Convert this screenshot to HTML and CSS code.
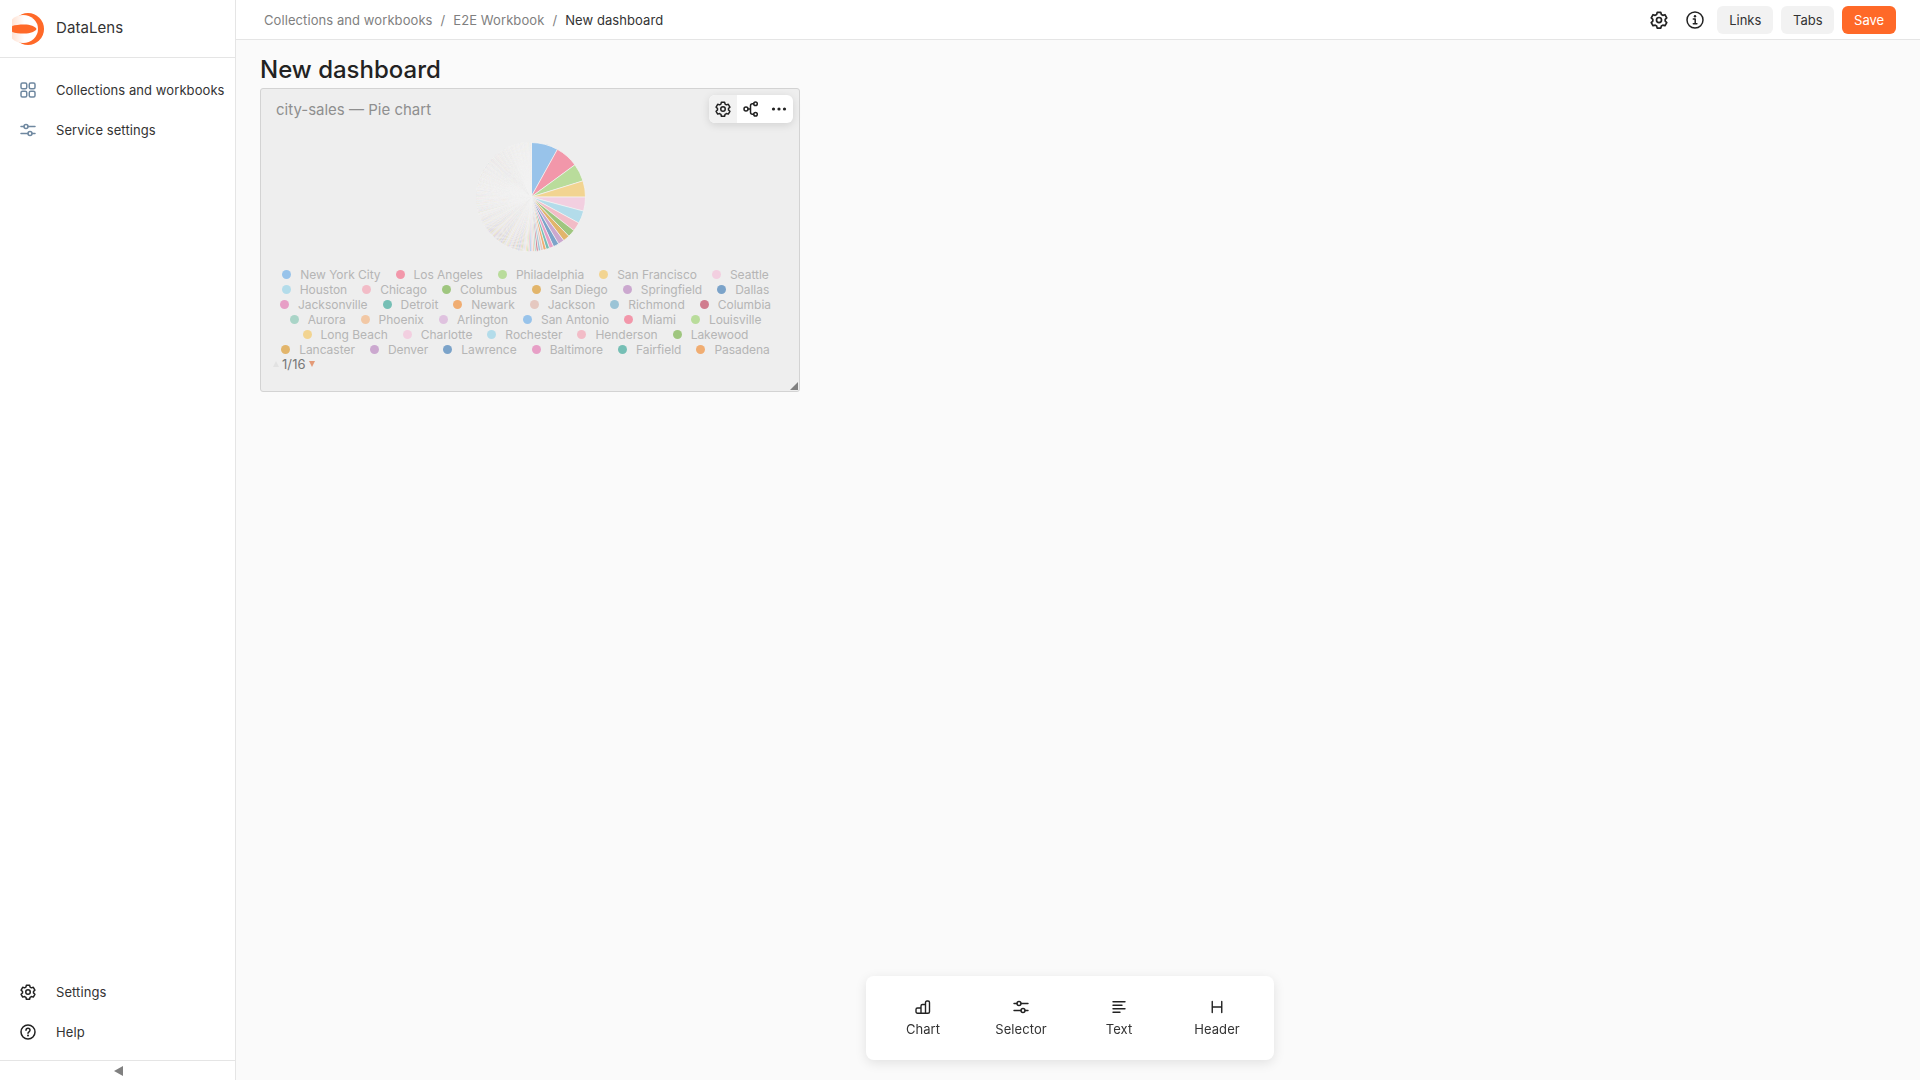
FILE: index.html
```html
<!DOCTYPE html>
<html lang="en">
<head>
  <meta charset="UTF-8">
  <title>New dashboard</title>
  <link rel="stylesheet" href="styles.css">
</head>
<body>
  <aside class="sidebar">
    <div class="logo-row">
      <svg class="logo" width="32" height="32" viewBox="0 0 32 32">
        <defs>
          <linearGradient id="logo-fade" x1="0" y1="0" x2="1" y2="0">
            <stop offset="0" stop-color="#ffd9c6"/>
            <stop offset="0.55" stop-color="#ffffff"/>
          </linearGradient>
        </defs>
        <circle cx="16" cy="16" r="16" fill="#ff6928"/>
        <ellipse cx="11" cy="16" rx="15" ry="14" fill="url(#logo-fade)"/>
        <path d="M.2 13c3-1 7-1.500 12-1.500 6 0 11.300 1.800 12.300 4.500-1 2.700-6.300 4.500-12.300 4.500-5 0-9-.5-12-1.500C-.1 17-.1 15 .2 13z" fill="#ff6928"/>
      </svg>
      <span class="logo-text">DataLens</span>
    </div>
    <nav class="nav">
      <a class="nav-item">
        <svg class="nav-icon slate" viewBox="0 0 16 16"><rect x="1" y="1" width="5.750" height="5.750" rx="1.500"/><rect x="9.250" y="1" width="5.750" height="5.750" rx="1.500"/><rect x="1" y="9.250" width="5.750" height="5.750" rx="1.500"/><rect x="9.250" y="9.250" width="5.750" height="5.750" rx="1.500"/></svg>
        <span>Collections and workbooks</span>
      </a>
      <a class="nav-item">
        <svg class="nav-icon slate" viewBox="0 0 16 16"><path d="M1 4.500h3M8 4.500h7M1 11.500h7M12 11.500h3"/><circle cx="6" cy="4.500" r="2"/><circle cx="10" cy="11.500" r="2"/></svg>
        <span>Service settings</span>
      </a>
    </nav>
    <div class="sidebar-spacer"></div>
    <nav class="nav nav-bottom">
      <a class="nav-item">
        <svg class="nav-icon" viewBox="0 0 16 16"><path d="M6.400 1.200h3.200l.5 1.900 1.300.75 1.900-.55 1.600 2.800-1.400 1.350v1.500l1.400 1.350-1.600 2.800-1.900-.55-1.300.75-.5 1.900H6.400l-.5-1.900-1.300-.75-1.900.55-1.600-2.800 1.400-1.350v-1.500L1.100 6.100l1.600-2.800 1.900.55 1.300-.75z"/><circle cx="8" cy="8" r="2.250"/></svg>
        <span>Settings</span>
      </a>
      <a class="nav-item">
        <svg class="nav-icon" viewBox="0 0 16 16"><circle cx="8" cy="8" r="7"/><path d="M6 6.300c0-2.600 4-2.600 4 0 0 1.500-2 1.500-2 3"/><circle class="dot" cx="8" cy="11.500" r="1"/></svg>
        <span>Help</span>
      </a>
    </nav>
    <div class="collapse-row"><span class="collapse-arrow"></span></div>
  </aside>

  <div class="page">
    <header class="topbar">
      <div class="breadcrumbs">
        <span>Collections and workbooks</span>
        <span class="sep">/</span>
        <span>E2E Workbook</span>
        <span class="sep">/</span>
        <span class="current">New dashboard</span>
      </div>
      <div class="actions">
        <svg class="top-icon" viewBox="0 0 16 16"><path d="M6.400 1.200h3.200l.5 1.900 1.300.75 1.900-.55 1.600 2.800-1.400 1.350v1.500l1.400 1.350-1.600 2.800-1.900-.55-1.300.75-.5 1.900H6.400l-.5-1.900-1.300-.75-1.900.55-1.600-2.800 1.400-1.350v-1.500L1.100 6.100l1.600-2.800 1.900.55 1.300-.75z"/><circle cx="8" cy="8" r="2.250"/></svg>
        <svg class="top-icon info" viewBox="0 0 18 18"><circle cx="9" cy="9" r="8"/><path d="M7.300 8h1.900v4.500M7.300 12.750h3.600"/><circle class="dot" cx="9" cy="5.250" r="1.200"/></svg>
        <button class="btn">Links</button>
        <button class="btn btn-tabs">Tabs</button>
        <button class="btn btn-save">Save</button>
      </div>
    </header>

    <main class="content">
      <h1>New dashboard</h1>
      <section class="widget">
        <div class="widget-title">city-sales — Pie chart</div>
        <div class="widget-controls">
          <span class="control control-active">
            <svg class="ctl-icon" viewBox="0 0 16 16"><path d="M6.400 1.200h3.200l.5 1.900 1.300.75 1.900-.55 1.600 2.800-1.400 1.350v1.500l1.400 1.350-1.600 2.800-1.900-.55-1.300.75-.5 1.900H6.400l-.5-1.900-1.300-.75-1.900.55-1.600-2.800 1.400-1.350v-1.500L1.100 6.100l1.600-2.800 1.900.55 1.300-.75z"/><circle cx="8" cy="8" r="2.250"/></svg>
          </span>
          <span class="control">
            <svg class="ctl-icon" viewBox="0 0 16 16"><circle cx="3" cy="8" r="2"/><circle cx="12.500" cy="2.800" r="1.800"/><circle cx="12.500" cy="13.200" r="1.800"/><path d="M5 8h2.500M10.700 2.800H9.500c-1 0-2 .8-2 2v6.400c0 1.200 1 2 2 2h1.200"/></svg>
          </span>
          <span class="control">
            <svg class="ctl-icon" viewBox="0 0 16 16"><circle class="dot" cx="2.500" cy="8" r="1.600"/><circle class="dot" cx="8" cy="8" r="1.600"/><circle class="dot" cx="13.500" cy="8" r="1.600"/></svg>
          </span>
        </div>
        <svg id="pie" class="pie" width="112" height="112" viewBox="-56 -56 112 112"></svg>
        <div class="legend">
          <div class="legend-row">
            <span class="item"><i class="c1"></i>New York City</span>
            <span class="item"><i class="c2"></i>Los Angeles</span>
            <span class="item"><i class="c3"></i>Philadelphia</span>
            <span class="item"><i class="c4"></i>San Francisco</span>
            <span class="item"><i class="c5"></i>Seattle</span>
          </div>
          <div class="legend-row">
            <span class="item"><i class="c6"></i>Houston</span>
            <span class="item"><i class="c7"></i>Chicago</span>
            <span class="item"><i class="c8"></i>Columbus</span>
            <span class="item"><i class="c9"></i>San Diego</span>
            <span class="item"><i class="c10"></i>Springfield</span>
            <span class="item"><i class="c11"></i>Dallas</span>
          </div>
          <div class="legend-row">
            <span class="item"><i class="c12"></i>Jacksonville</span>
            <span class="item"><i class="c13"></i>Detroit</span>
            <span class="item"><i class="c14"></i>Newark</span>
            <span class="item"><i class="c15"></i>Jackson</span>
            <span class="item"><i class="c16"></i>Richmond</span>
            <span class="item"><i class="c17"></i>Columbia</span>
          </div>
          <div class="legend-row">
            <span class="item"><i class="c18"></i>Aurora</span>
            <span class="item"><i class="c19"></i>Phoenix</span>
            <span class="item"><i class="c20"></i>Arlington</span>
            <span class="item"><i class="c1"></i>San Antonio</span>
            <span class="item"><i class="c2"></i>Miami</span>
            <span class="item"><i class="c3"></i>Louisville</span>
          </div>
          <div class="legend-row">
            <span class="item"><i class="c4"></i>Long Beach</span>
            <span class="item"><i class="c5"></i>Charlotte</span>
            <span class="item"><i class="c6"></i>Rochester</span>
            <span class="item"><i class="c7"></i>Henderson</span>
            <span class="item"><i class="c8"></i>Lakewood</span>
          </div>
          <div class="legend-row">
            <span class="item"><i class="c9"></i>Lancaster</span>
            <span class="item"><i class="c10"></i>Denver</span>
            <span class="item"><i class="c11"></i>Lawrence</span>
            <span class="item"><i class="c12"></i>Baltimore</span>
            <span class="item"><i class="c13"></i>Fairfield</span>
            <span class="item"><i class="c14"></i>Pasadena</span>
          </div>
        </div>
        <div class="pager">
          <span class="arrow-up"></span>
          <span>1/16</span>
          <span class="arrow-down"></span>
        </div>
        <span class="resize-handle"></span>
      </section>
    </main>

    <div class="toolbar">
      <div class="tool">
        <svg class="tool-icon" viewBox="0 0 16 16"><path d="M1 10.500c0-.8.6-1.500 1.500-1.500H6v5.250H2.500C1.600 14.250 1 13.600 1 12.750zM6 14.250V7c0-.8.6-1.500 1.500-1.500H10.500v8.750zM10.500 14.250V3.500c0-.8.6-1.500 1.500-1.500h1c.8 0 1.500.7 1.500 1.500v9.250c0 .9-.7 1.500-1.500 1.500z"/></svg>
        <span>Chart</span>
      </div>
      <div class="tool">
        <svg class="tool-icon" viewBox="0 0 16 16"><path d="M1 4.500h3M8 4.500h7M1 11.500h7M12 11.500h3"/><circle cx="6" cy="4.500" r="2"/><circle cx="10" cy="11.500" r="2"/></svg>
        <span>Selector</span>
      </div>
      <div class="tool">
        <svg class="tool-icon" viewBox="0 0 16 16"><path d="M2 2.750h12M2 6.250h9M2 9.750h12M2 13.250h7"/></svg>
        <span>Text</span>
      </div>
      <div class="tool">
        <svg class="tool-icon" viewBox="0 0 16 16"><path d="M3.250 2.500v11M12.750 2.500v11M3.250 8h9.500"/></svg>
        <span>Header</span>
      </div>
    </div>
  </div>

  <script src="pie.js"></script>
</body>
</html>
```

FILE: styles.css
```css
* {
  box-sizing: border-box;
}

html, body {
  height: 100%;
}

body {
  margin: 0;
  display: flex;
  font-family: Inter, "Liberation Sans", sans-serif;
  font-size: 13px;
  line-height: 18px;
  letter-spacing: 0.08px;
  color: #333333;
  background-color: #fafafa;
  overflow: hidden;
}

svg {
  fill: none;
  stroke: currentColor;
  stroke-width: 1.5;
  stroke-linejoin: round;
  stroke-linecap: round;
  flex: none;
}

.dot {
  fill: currentColor;
  stroke: none;
}

/* sidebar */
.sidebar {
  width: 236px;
  flex: none;
  display: flex;
  flex-direction: column;
  background-color: #ffffff;
  border-right: 1px solid #e5e5e5;
}

.logo-row {
  height: 58px;
  padding-left: 12px;
  display: flex;
  align-items: center;
  gap: 12px;
  border-bottom: 1px solid #e5e5e5;
}

.logo {
  stroke: none;
}

.logo-text {
  padding-bottom: 1px;
  font-size: 15px;
  color: #333333;
}

.nav {
  display: flex;
  flex-direction: column;
  padding-top: 12px;
}

.nav-bottom {
  padding-top: 0;
  padding-bottom: 8px;
}

.nav-item {
  height: 40px;
  padding-left: 20px;
  display: flex;
  align-items: center;
  gap: 20px;
  color: #333333;
}

.nav-icon {
  width: 16px;
  height: 16px;
  color: #222222;
}

.nav-icon.slate {
  color: #6f88a0;
}

.sidebar-spacer {
  flex: 1;
}

.collapse-row {
  height: 20px;
  padding-left: 2px;
  border-top: 1px solid #e5e5e5;
  display: flex;
  justify-content: center;
  align-items: center;
}

.collapse-arrow {
  width: 0;
  height: 0;
  border-style: solid;
  border-width: 5px 9px 5px 0;
  border-color: transparent #808080 transparent transparent;
}

/* top bar */
.page {
  flex: 1;
  display: flex;
  flex-direction: column;
  min-width: 0;
}

.topbar {
  height: 40px;
  flex: none;
  padding: 0 24px 0 28px;
  display: flex;
  align-items: center;
  justify-content: space-between;
  background-color: #ffffff;
  border-bottom: 1px solid #e5e5e5;
}

.breadcrumbs {
  display: flex;
  gap: 8px;
  color: #7f7f7f;
}

.breadcrumbs .current {
  color: #333333;
}

.actions {
  display: flex;
  align-items: center;
  gap: 8px;
}

.top-icon {
  width: 18px;
  height: 18px;
  margin-right: 10px;
  color: #222222;
}

.top-icon.info {
  margin-right: 5px;
}

.btn {
  height: 28px;
  padding: 0 11.8px;
  border: none;
  border-radius: 6px;
  font-family: inherit;
  font-size: 13px;
  color: #333333;
  background-color: #f2f2f2;
}

.btn-save {
  color: #ffffff;
  background-color: #ff6928;
}

/* dashboard */
.content {
  flex: 1;
  padding: 16px 24px;
}

h1 {
  margin: 0 0 4px;
  font-size: 24px;
  font-weight: 500;
  line-height: 28px;
  letter-spacing: 0;
  color: #222222;
}

.widget {
  position: relative;
  width: 540px;
  height: 304px;
  padding: 11px 0 0;
  background-color: #eeeeee;
  border: 1px solid #d3d3d3;
  border-radius: 3px;
}

.widget-title {
  padding-left: 15px;
  font-size: 15px;
  line-height: 20px;
  letter-spacing: 0;
  color: #8f8f8f;
}

.widget-controls {
  position: absolute;
  top: 6px;
  right: 6px;
  height: 28px;
  display: flex;
  border-radius: 6px;
  overflow: hidden;
  background-color: #ffffff;
  box-shadow: 0 2px 8px rgba(0, 0, 0, 0.12);
}

.control {
  width: 28px;
  display: flex;
  align-items: center;
  justify-content: center;
  color: #222222;
}

.control-active {
  background-color: #f2f2f2;
}

.ctl-icon {
  width: 16px;
  height: 16px;
}

.pie {
  display: block;
  margin: 21px 0 0 214px;
  stroke: none;
}

.legend {
  margin-top: 14px;
  padding-right: 9px;
  font-size: 12px;
  line-height: 15px;
  letter-spacing: -0.03px;
  color: #b5b5b5;
}

.legend-row {
  display: flex;
  justify-content: center;
  gap: 15px;
}

.item {
  display: flex;
  align-items: center;
  gap: 9px;
}

.item i {
  width: 9px;
  height: 9px;
  border-radius: 50%;
}

.c1 { background-color: #98c3ea; }
.c2 { background-color: #f297aa; }
.c3 { background-color: #b9dc9b; }
.c4 { background-color: #f2d491; }
.c5 { background-color: #f2cfe0; }
.c6 { background-color: #b3dcea; }
.c7 { background-color: #f2bcc7; }
.c8 { background-color: #9fc67f; }
.c9 { background-color: #e2b56b; }
.c10 { background-color: #cba8cf; }
.c11 { background-color: #7ba3c9; }
.c12 { background-color: #e79fc6; }
.c13 { background-color: #76bfb5; }
.c14 { background-color: #f0ad72; }
.c15 { background-color: #e5c8c0; }
.c16 { background-color: #9cc4d6; }
.c17 { background-color: #d07d8e; }
.c18 { background-color: #a9d4c7; }
.c19 { background-color: #f2c8a5; }
.c20 { background-color: #dfc2df; }

.pager {
  margin-top: 0;
  padding-left: 12px;
  display: flex;
  align-items: center;
  gap: 3px;
  font-size: 13px;
  line-height: 14px;
  color: #777777;
}

.arrow-up {
  width: 0;
  height: 0;
  border-style: solid;
  border-width: 0 3.500px 6px;
  border-color: transparent transparent #e2e2e2;
}

.arrow-down {
  width: 0;
  height: 0;
  border-style: solid;
  border-width: 6px 3.500px 0;
  border-color: #e39a77 transparent transparent;
}

.resize-handle {
  position: absolute;
  right: 1px;
  bottom: 1px;
  width: 0;
  height: 0;
  border-style: solid;
  border-width: 0 0 8px 8px;
  border-color: transparent transparent #808080;
}

/* bottom toolbar */
.toolbar {
  position: fixed;
  left: 866px;
  bottom: 20px;
  width: 408px;
  height: 84px;
  padding: 1px 8px 0;
  display: flex;
  background-color: #ffffff;
  border-radius: 8px;
  box-shadow: 0 3px 12px rgba(0, 0, 0, 0.1);
}

.tool {
  width: 98px;
  display: flex;
  flex-direction: column;
  align-items: center;
  justify-content: center;
  gap: 5px;
  color: #333333;
}

.tool-icon {
  width: 16px;
  height: 16px;
  stroke-width: 1.400;
  color: #222222;
}
```

FILE: pie.js
```js
const colors = ['#98c3ea', '#f297aa', '#b9dc9b', '#f2d491', '#f2cfe0', '#b3dcea', '#f2bcc7', '#9fc67f', '#e2b56b', '#cba8cf',
  '#7ba3c9', '#e79fc6', '#76bfb5', '#f0ad72', '#e5c8c0', '#9cc4d6', '#d07d8e', '#a9d4c7', '#f2c8a5', '#dfc2df'];
const pie = document.getElementById('pie');
const R = 54.5;

// the first slices are read off the chart, the long tail just gets thinner
const sizes = [29, 24.7, 19, 17.3, 15, 13.5, 9.5, 8, 7, 6.5, 6, 4.6, 3.6, 3.2, 2.8, 2.5, 2.2, 2, 1.8, 1.7, 1.6, 1.5, 1.4, 1.3];
let used = sizes.reduce((a, b) => a + b, 0);
let next = 1.2;
while (used < 360) {
  const size = Math.min(next, 360 - used);
  sizes.push(size);
  used += size;
  next = Math.max(next * 0.99, 0.25);
}

const point = (deg) => {
  const a = (deg - 90) * Math.PI / 180;
  return (R * Math.cos(a)).toFixed(2) + ' ' + (R * Math.sin(a)).toFixed(2);
};

let angle = 0;
sizes.forEach((size, i) => {
  const path = document.createElementNS('http://www.w3.org/2000/svg', 'path');
  path.setAttribute('d', 'M0 0L' + point(angle) + 'A' + R + ' ' + R + ' 0 0 1 ' + point(angle + size) + 'Z');
  path.setAttribute('fill', colors[i % colors.length]);
  path.setAttribute('stroke', '#f3f3f3');
  path.setAttribute('stroke-width', '0.8');
  pie.appendChild(path);
  angle += size;
});
```
